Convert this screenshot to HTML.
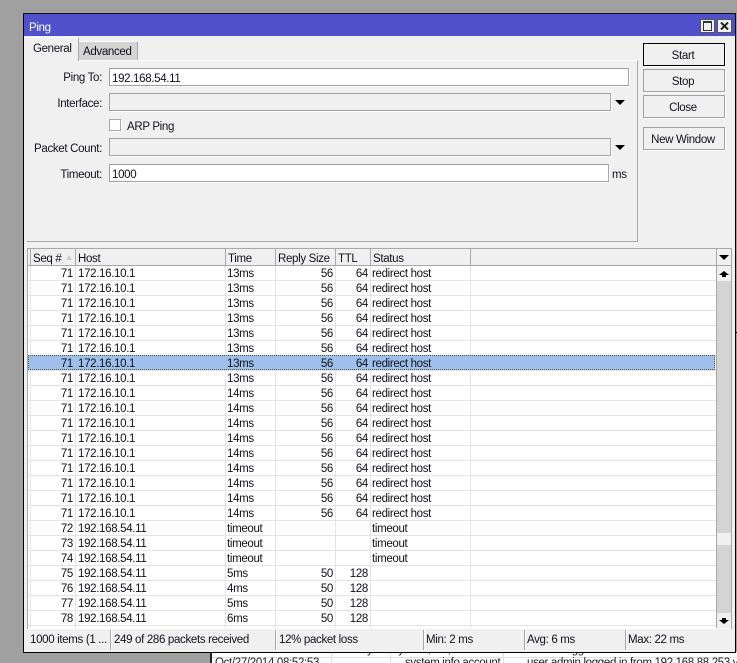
<!DOCTYPE html>
<html><head><meta charset="utf-8"><style>
html,body{margin:0;padding:0;width:737px;height:663px;overflow:hidden}
body{background:#a0a0a0;font:11.5px/15px "Liberation Sans",sans-serif;letter-spacing:-.33px;color:#10101c}
div{position:absolute;box-sizing:border-box}
#w{left:0;top:0;width:737px;height:663px;overflow:hidden;background:#a0a0a0}
.t{white-space:nowrap}
.f{background:#fff;border:1px solid #a0a0a0;border-right-color:#a8a8a8;box-shadow:1px 1px 0 #fff;height:18px;line-height:20px;padding-left:2px;overflow:hidden}
.d{background:#f0f0f0}
.l{text-align:right;width:80px;left:22px}
.b{left:643px;width:82px;height:23px;background:#f0f0f0;border:1px solid #a0a0a0;box-shadow:inset 0 0 0 1px #f0f0f0,1px 1px 0 #fff;text-align:center;line-height:24px;padding-right:2px;overflow:hidden}
.a{width:0;height:0;border-left:5px solid transparent;border-right:5px solid transparent;border-top:5px solid #000}
.v{top:266px;width:1px;height:362px;background:#e4e4e4}
.h{top:249px;height:16px;width:1px;background:#a8a8a8}
.c{top:1px;white-space:pre}
.r{text-align:right}
.hh{top:252px;white-space:nowrap}
.s{top:633px;white-space:nowrap}
.sv{top:630px;width:2px;height:20px;background:#a8a8a8;border-right:1px solid #fff}
.bt{color:#222;white-space:nowrap;line-height:13px}
</style></head><body><div id="w">
<div style="left:210px;top:652px;width:527px;height:11px;background:#fff;border-left:2px solid #222;overflow:hidden"></div>
<div style="left:212px;top:657px;width:525px;height:1px;background:#e0e0e0"></div>
<div style="left:331px;top:652px;width:1px;height:11px;background:#e0e0e0"></div>
<div style="left:390px;top:652px;width:1px;height:11px;background:#e0e0e0"></div>
<div style="left:503px;top:652px;width:1px;height:11px;background:#e0e0e0"></div>
<div class="bt" style="left:216px;top:644px">Oct/27/2014 08:52:53</div>
<div class="bt" style="left:333px;top:644px">memory</div>
<div class="bt" style="left:393px;top:644px">system,info,account</div>
<div class="bt" style="left:507px;top:644px">user admin logged in from 192.168.88.253 via</div>
<div class="bt" style="left:215px;top:657px">Oct/27/2014 08:52:53</div>
<div class="bt" style="left:405px;top:657px">system,info,account</div>
<div class="bt" style="left:527px;top:657px">user admin logged in from 192.168.88.253 via</div>
<div style="left:736px;top:332px;width:1px;height:1px;background:#000"></div>

<div style="left:23px;top:13px;width:713px;height:640px;background:#f0f0f0;border:1px solid #000;border-top-color:#101010"></div>
<div style="left:24px;top:14px;width:711px;height:22px;background:#4f50ca"></div>
<div class="t" style="left:29px;top:20px;color:#fff;line-height:17px">Ping</div>
<div style="left:700px;top:19px;width:15px;height:14px;background:#f0f0f0;border:1px solid #555"><div style="left:2px;top:1px;width:9px;height:10px;border:1px solid #333;border-top-width:2px"></div></div>
<div style="left:717px;top:19px;width:15px;height:14px;background:#f0f0f0;border:1px solid #555"><svg style="position:absolute;left:2px;top:2px" width="9" height="8"><path d="M1 0.5L8 7.5M8 0.5L1 7.5" stroke="#222" stroke-width="2" fill="none"/></svg></div>

<div style="left:27px;top:60px;width:611px;height:182px;border-right:1px solid #a8a8a8;border-bottom:1px solid #a8a8a8;border-top:1px solid #fff"></div>
<div style="left:27px;top:37px;width:52px;height:24px;background:#f0f0f0;border-right:1px solid #a8a8a8;border-top:1px solid #fff"></div>
<div class="t" style="left:33px;top:42px">General</div>
<div style="left:79px;top:41px;width:59px;height:19px;background:#d4d4d4;border-right:1px solid #a8a8a8;border-top:1px solid #fff"></div>
<div class="t" style="left:83px;top:45px">Advanced</div>

<div class="l t" style="top:71px">Ping To:</div>
<div class="f" style="left:109px;top:68px;width:520px">192.168.54.11</div>
<div class="l t" style="top:97px">Interface:</div>
<div class="f d" style="left:109px;top:93px;width:502px"></div>
<div class="a" style="left:615px;top:100px"></div>
<div style="left:109px;top:119px;width:12px;height:12px;background:#fff;border:1px solid #a8a8a8;box-shadow:1px 1px 0 #fff"></div>
<div class="t" style="left:127px;top:120px">ARP Ping</div>
<div class="l t" style="top:142px">Packet Count:</div>
<div class="f d" style="left:109px;top:138px;width:502px"></div>
<div class="a" style="left:615px;top:145px"></div>
<div class="l t" style="top:168px">Timeout:</div>
<div class="f" style="left:109px;top:164px;width:500px">1000</div>
<div class="t" style="left:612px;top:168px">ms</div>

<div class="b" style="top:43px;border-color:#000">Start</div>
<div class="b" style="top:69px">Stop</div>
<div class="b" style="top:95px">Close</div>
<div class="b" style="top:127px">New Window</div>

<div style="left:27px;top:248px;width:705px;height:381px;background:#fff;border:1px solid #a8a8a8;border-width:1px 1px 0 1px"></div>
<div style="left:28px;top:249px;width:688px;height:16px;background:#f0f0f0"></div>
<div style="left:28px;top:265px;width:703px;height:1px;background:#a8a8a8"></div>
<div style="left:28px;top:266px;width:688px;height:362px;background:repeating-linear-gradient(to bottom,#fff 0,#fff 14px,#e4e4e4 14px,#e4e4e4 15px)"></div>
<div class="v" style="left:30px"></div>
<div class="v" style="left:75px"></div>
<div class="v" style="left:225px"></div>
<div class="v" style="left:275px"></div>
<div class="v" style="left:335px"></div>
<div class="v" style="left:370px"></div>
<div class="v" style="left:470px"></div>
<div style="left:28px;top:355px;width:687px;height:15px;background:#9ec0ea;border:1px dotted #555"></div>
<div class="h" style="left:30px"></div><div class="h" style="left:75px"></div><div class="h" style="left:225px"></div><div class="h" style="left:275px"></div><div class="h" style="left:335px"></div><div class="h" style="left:370px"></div><div class="h" style="left:470px"></div>
<div class="hh" style="left:33px">Seq #</div>
<div style="left:66px;top:255px;width:0;height:0;border-left:3px solid transparent;border-right:3px solid transparent;border-bottom:5px solid #ccc"></div>
<div class="hh" style="left:78px">Host</div>
<div class="hh" style="left:228px">Time</div>
<div class="hh" style="left:278px">Reply Size</div>
<div class="hh" style="left:338px">TTL</div>
<div class="hh" style="left:373px">Status</div>

<div style="left:28px;top:266px;width:688px;height:362px;overflow:hidden">
<div class="c r" style="left:0;width:45px">71
71
71
71
71
71
71
71
71
71
71
71
71
71
71
71
71
72
73
74
75
76
77
78
79</div>
<div class="c" style="left:50px">172.16.10.1
172.16.10.1
172.16.10.1
172.16.10.1
172.16.10.1
172.16.10.1
172.16.10.1
172.16.10.1
172.16.10.1
172.16.10.1
172.16.10.1
172.16.10.1
172.16.10.1
172.16.10.1
172.16.10.1
172.16.10.1
172.16.10.1
192.168.54.11
192.168.54.11
192.168.54.11
192.168.54.11
192.168.54.11
192.168.54.11
192.168.54.11
192.168.54.11</div>
<div class="c" style="left:199px">13ms
13ms
13ms
13ms
13ms
13ms
13ms
13ms
14ms
14ms
14ms
14ms
14ms
14ms
14ms
14ms
14ms
timeout
timeout
timeout
5ms
4ms
5ms
6ms
5ms</div>
<div class="c r" style="left:248px;width:57px">56
56
56
56
56
56
56
56
56
56
56
56
56
56
56
56
56



50
50
50
50
50</div>
<div class="c r" style="left:300px;width:40px">64
64
64
64
64
64
64
64
64
64
64
64
64
64
64
64
64



128
128
128
128
128</div>
<div class="c" style="left:344px">redirect host
redirect host
redirect host
redirect host
redirect host
redirect host
redirect host
redirect host
redirect host
redirect host
redirect host
redirect host
redirect host
redirect host
redirect host
redirect host
redirect host
timeout
timeout
timeout</div>
</div>

<div style="left:716px;top:249px;width:15px;height:16px;background:#f0f0f0;border-left:1px solid #a8a8a8"></div>
<div class="a" style="left:719px;top:255px"></div>
<div style="left:716px;top:266px;width:15px;height:362px;background:#d4d4d4;border-left:1px solid #a8a8a8"></div>
<div style="left:716px;top:266px;width:15px;height:15px;background:#f0f0f0;border-left:1px solid #a8a8a8"></div>
<div style="left:719px;top:271px;width:0;height:0;border-left:5px solid transparent;border-right:5px solid transparent;border-bottom:4px solid #000"></div>
<div style="left:722px;top:275px;width:4px;height:2px;background:#000"></div>
<div style="left:716px;top:533px;width:15px;height:12px;background:#f0f0f0;border-left:1px solid #a8a8a8"></div>
<div style="left:716px;top:613px;width:15px;height:15px;background:#f0f0f0;border-left:1px solid #a8a8a8"></div>
<div style="left:722px;top:618px;width:4px;height:2px;background:#000"></div>
<div style="left:719px;top:620px;width:0;height:0;border-left:5px solid transparent;border-right:5px solid transparent;border-top:4px solid #000"></div>

<div style="left:24px;top:629px;width:711px;height:23px;background:#f0f0f0"></div>
<div class="s" style="left:30px">1000 items (1 ...</div>
<div class="sv" style="left:110px"></div>
<div class="s" style="left:114px">249 of 286 packets received</div>
<div class="sv" style="left:275px"></div>
<div class="s" style="left:279px">12% packet loss</div>
<div class="sv" style="left:423px"></div>
<div class="s" style="left:426px">Min: 2 ms</div>
<div class="sv" style="left:524px"></div>
<div class="s" style="left:527px">Avg: 6 ms</div>
<div class="sv" style="left:625px"></div>
<div class="s" style="left:628px">Max: 22 ms</div>
</div></body></html>
